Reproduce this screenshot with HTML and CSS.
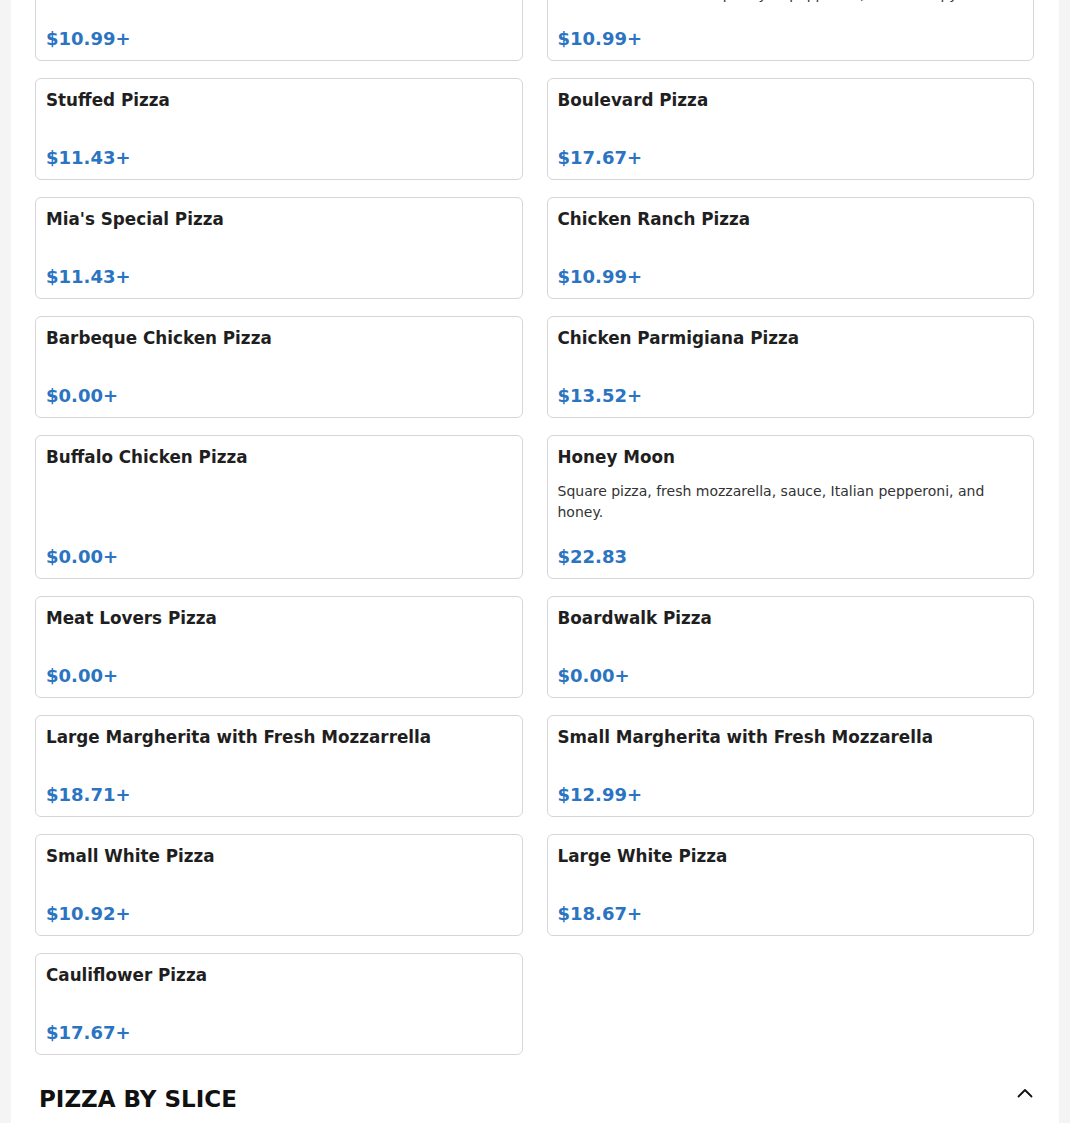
FILE: index.html
```html
<!DOCTYPE html>
<html lang="en">
<head>
<meta charset="utf-8">
<title>Menu</title>
<link rel="stylesheet" href="styles.css">
<script src="script.js" defer></script>
</head>
<body>
<main class="page">
  <section class="menu-section">
    <div class="section-header">
      <h2 class="section-title">PIZZA</h2>
      <svg class="chevron" viewBox="0 0 16 16" aria-hidden="true"><path d="M1.5 10.5 L8 4 L14.5 10.5"/></svg>
    </div>
    <div class="grid">
      <div class="card">
        <div class="info"><h3 class="item-name">Cheese Pizza</h3></div>
        <div class="price">$10.99+</div>
      </div>
      <div class="card">
        <div class="info">
          <h3 class="item-name">Pepperoni Pizza</h3>
          <p class="desc">Our classic hand-tossed pie topped with homemade sauce, mozzarella cheese and plenty of pepperoni, baked crispy.</p>
        </div>
        <div class="price">$10.99+</div>
      </div>
      <div class="card" id="first-visible">
        <div class="info"><h3 class="item-name">Stuffed Pizza</h3></div>
        <div class="price">$11.43+</div>
      </div>
      <div class="card">
        <div class="info"><h3 class="item-name">Boulevard Pizza</h3></div>
        <div class="price">$17.67+</div>
      </div>
      <div class="card">
        <div class="info"><h3 class="item-name">Mia's Special Pizza</h3></div>
        <div class="price">$11.43+</div>
      </div>
      <div class="card">
        <div class="info"><h3 class="item-name">Chicken Ranch Pizza</h3></div>
        <div class="price">$10.99+</div>
      </div>
      <div class="card">
        <div class="info"><h3 class="item-name">Barbeque Chicken Pizza</h3></div>
        <div class="price">$0.00+</div>
      </div>
      <div class="card">
        <div class="info"><h3 class="item-name">Chicken Parmigiana Pizza</h3></div>
        <div class="price">$13.52+</div>
      </div>
      <div class="card">
        <div class="info"><h3 class="item-name">Buffalo Chicken Pizza</h3></div>
        <div class="price">$0.00+</div>
      </div>
      <div class="card">
        <div class="info">
          <h3 class="item-name">Honey Moon</h3>
          <p class="desc">Square pizza, fresh mozzarella, sauce, Italian pepperoni, and honey.</p>
        </div>
        <div class="price">$22.83</div>
      </div>
      <div class="card">
        <div class="info"><h3 class="item-name">Meat Lovers Pizza</h3></div>
        <div class="price">$0.00+</div>
      </div>
      <div class="card">
        <div class="info"><h3 class="item-name">Boardwalk Pizza</h3></div>
        <div class="price">$0.00+</div>
      </div>
      <div class="card">
        <div class="info"><h3 class="item-name">Large Margherita with Fresh Mozzarrella</h3></div>
        <div class="price">$18.71+</div>
      </div>
      <div class="card">
        <div class="info"><h3 class="item-name">Small Margherita with Fresh Mozzarella</h3></div>
        <div class="price">$12.99+</div>
      </div>
      <div class="card">
        <div class="info"><h3 class="item-name">Small White Pizza</h3></div>
        <div class="price">$10.92+</div>
      </div>
      <div class="card">
        <div class="info"><h3 class="item-name">Large White Pizza</h3></div>
        <div class="price">$18.67+</div>
      </div>
      <div class="card">
        <div class="info"><h3 class="item-name">Cauliflower Pizza</h3></div>
        <div class="price">$17.67+</div>
      </div>
    </div>
  </section>

  <section class="menu-section">
    <div class="section-header">
      <h2 class="section-title">PIZZA BY SLICE</h2>
      <svg class="chevron" viewBox="0 0 16 16" aria-hidden="true"><path d="M1.5 10.5 L8 4 L14.5 10.5"/></svg>
    </div>
    <div class="grid">
      <div class="card">
        <div class="info"><h3 class="item-name">Cheese Slice</h3></div>
        <div class="price">$3.25+</div>
      </div>
      <div class="card">
        <div class="info"><h3 class="item-name">Pepperoni Slice</h3></div>
        <div class="price">$3.75+</div>
      </div>
      <div class="card">
        <div class="info"><h3 class="item-name">Sicilian Slice</h3></div>
        <div class="price">$3.95+</div>
      </div>
      <div class="card">
        <div class="info"><h3 class="item-name">White Slice</h3></div>
        <div class="price">$3.95+</div>
      </div>
    </div>
  </section>
</main>
</body>
</html>
```

FILE: styles.css
```css
html, body {
  margin: 0;
  padding: 0;
}

body {
  background: #f4f4f5;
  font-family: "DejaVu Sans", "Liberation Sans", sans-serif;
  color: #1f1f22;
}

.page {
  margin: 0 11px;
  background: #ffffff;
  padding: 20px 25px 400px 24px;
  min-height: 100vh;
}

.menu-section + .menu-section {
  margin-top: 30.5px;
}

.section-header {
  display: flex;
  justify-content: space-between;
  align-items: flex-start;
  padding: 0 1px 0 4px;
  margin-bottom: 16px;
}

.section-title {
  margin: 0;
  font-size: 23px;
  line-height: 1.2;
  font-weight: 700;
  color: #111111;
}

.chevron {
  width: 16px;
  height: 16px;
  flex: none;
}

.chevron path {
  fill: none;
  stroke: #111111;
  stroke-width: 1.8;
  stroke-linecap: round;
  stroke-linejoin: round;
}

.grid {
  display: grid;
  grid-template-columns: 1fr 1fr;
  column-gap: 24px;
  row-gap: 17px;
}

.card {
  display: flex;
  flex-direction: column;
  border: 1px solid #d6d6d8;
  border-radius: 6px;
  padding: 12px 10px 8px;
  background: #ffffff;
}

.info {
  padding-bottom: 20px;
}

.item-name {
  margin: 0 0 14px;
  font-size: 16.8px;
  line-height: 19.2px;
  font-weight: 700;
  color: #1f1f22;
}

.desc {
  margin: -1px 0 0;
  font-size: 14px;
  line-height: 1.5;
  color: #333333;
}

.price {
  margin-top: auto;
  font-size: 18px;
  line-height: 1.5;
  font-weight: 700;
  color: #2b74c1;
}
```

FILE: script.js
```js
(function () {
  function place() {
    var el = document.getElementById('first-visible');
    if (!el) return;
    var top = el.getBoundingClientRect().top + window.scrollY;
    window.scrollTo(0, top - 78);
  }
  if ('scrollRestoration' in history) history.scrollRestoration = 'manual';
  place();
  window.addEventListener('load', place);
})();
```
